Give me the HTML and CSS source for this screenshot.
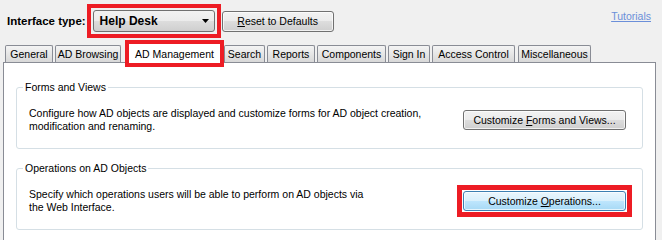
FILE: index.html
```html
<!DOCTYPE html>
<html lang="en">

<head>
    <meta charset="UTF-8">
    <title>Web Interface Settings</title>
    <link rel="stylesheet" href="styles.css">
</head>

<body>
    <div class="topbar">
        <span class="label">Interface type:</span>
        <div class="mark combo-mark">
            <div class="combo">
                <span>Help Desk</span>
                <svg class="arrow" width="7" height="4" viewBox="0 0 7 4"><path d="M0 0h7L3.5 4z" fill="#000"/></svg>
            </div>
        </div>
        <button class="btn reset"><u>R</u>eset to Defaults</button>
        <a class="tutorials" href="#">Tutorials</a>
    </div>

    <div class="tabs">
        <div class="tab tab-general">General</div>
        <div class="tab tab-browsing">AD Browsing</div>
        <div class="tab active">AD Management</div>
        <div class="tab tab-search">Search</div>
        <div class="tab tab-reports">Reports</div>
        <div class="tab tab-components">Components</div>
        <div class="tab tab-signin">Sign In</div>
        <div class="tab tab-access">Access Control</div>
        <div class="tab tab-misc">Miscellaneous</div>
    </div>

    <div class="panel">
        <fieldset class="group">
            <legend>Forms and Views</legend>
            <div class="group-row">
                <p class="desc">Configure how AD objects are displayed and customize forms for AD object creation,<br>modification and renaming.</p>
                <button class="btn wide">Customize <u>F</u>orms and Views...</button>
            </div>
        </fieldset>

        <fieldset class="group second">
            <legend>Operations on AD Objects</legend>
            <div class="group-row">
                <p class="desc">Specify which operations users will be able to perform on AD objects via<br>the Web Interface.</p>
                <span class="mark button-mark">
                    <button class="btn wide hot">Customize <u>O</u>perations...</button>
                </span>
            </div>
        </fieldset>
    </div>
</body>

</html>
```

FILE: styles.css
```css
body {
    margin: 0;
    background-color: #f0f0f0;
    font-family: "Liberation Sans", Arial, sans-serif;
    font-size: 10.5px;
    color: #000;
    overflow: hidden;
}

.topbar {
    display: flex;
    align-items: center;
    height: 42px;
    padding: 0 11px 0 7px;
}

.label {
    font-weight: bold;
    font-size: 11.5px;
    margin-right: 7px;
}

/* red annotation frames */
.mark {
    display: flex;
    outline-style: solid;
    outline-color: #ed1c24;
}

.combo-mark {
    outline-width: 4px;
    outline-offset: 2px;
}

.button-mark {
    outline-width: 5px;
    outline-offset: 1px;
}

.combo {
    display: flex;
    align-items: center;
    justify-content: space-between;
    box-sizing: border-box;
    width: 122px;
    height: 22px;
    padding: 0 5px 0 6px;
    border: 1px solid #707070;
    border-radius: 3px;
    background: linear-gradient(#f2f2f2, #ebebeb 50%, #dddddd 50%, #cfcfcf);
    font-weight: bold;
    font-size: 12px;
}

.btn {
    font: inherit;
    color: #000;
    height: 21px;
    padding: 0;
    border: 1px solid #707070;
    border-radius: 3px;
    background: linear-gradient(#f2f2f2, #ebebeb 50%, #dddddd 50%, #cfcfcf);
    box-shadow: inset 0 0 0 1px rgba(255, 255, 255, 0.7);
}

.reset {
    width: 112px;
    margin-left: 7px;
}

.tutorials {
    margin-left: auto;
    align-self: flex-start;
    margin-top: 10px;
    color: #6b8fd9;
}

.tabs {
    display: flex;
    align-items: flex-end;
    height: 20px;
    padding-left: 5px;
}

.tab {
    box-sizing: border-box;
    height: 17px;
    margin-right: 2px;
    line-height: 16px;
    text-align: center;
    white-space: nowrap;
    border: 1px solid #898c95;
    border-bottom: none;
    border-radius: 2px 2px 0 0;
    background: linear-gradient(#f4f4f4, #e6e6e6 50%, #d8d8d8);
}

.tab-general { width: 48px; }
.tab-browsing { width: 66px; }
.tab-search { width: 41px; }
.tab-reports { width: 48px; }
.tab-components { width: 69px; }
.tab-signin { width: 42px; }
.tab-access { width: 83px; margin-right: 3px; }
.tab-misc { width: 73px; }

.tab.active {
    width: 91px;
    height: 19px;
    margin: 0 4px -1px 6px;
    padding-top: 2px;
    border: none;
    border-radius: 0;
    background: #fff;
    outline: 4px solid #ed1c24;
}

.panel {
    height: 200px;
    margin: 0 6px 0 3px;
    background-color: #fff;
    border: 1px solid #898c95;
}

.group {
    margin: 18px 12px 0;
    padding: 13px 16px 15px 12px;
    border: 1px solid #d5dfe5;
    border-radius: 3px;
}

.group.second {
    margin-top: 13px;
}

.group legend {
    margin-left: -6px;
    padding: 0 2px;
    line-height: 13px;
}

.group-row {
    display: flex;
    align-items: center;
    justify-content: space-between;
}

.desc {
    margin: 0;
    line-height: 13px;
    white-space: nowrap;
}

.wide {
    width: 163px;
    height: 20px;
}

.hot {
    border-color: #3c7fb1;
    background: linear-gradient(#eaf6fd, #d9f0fc 50%, #bee6fd 50%, #a7d9f5);
}
```
